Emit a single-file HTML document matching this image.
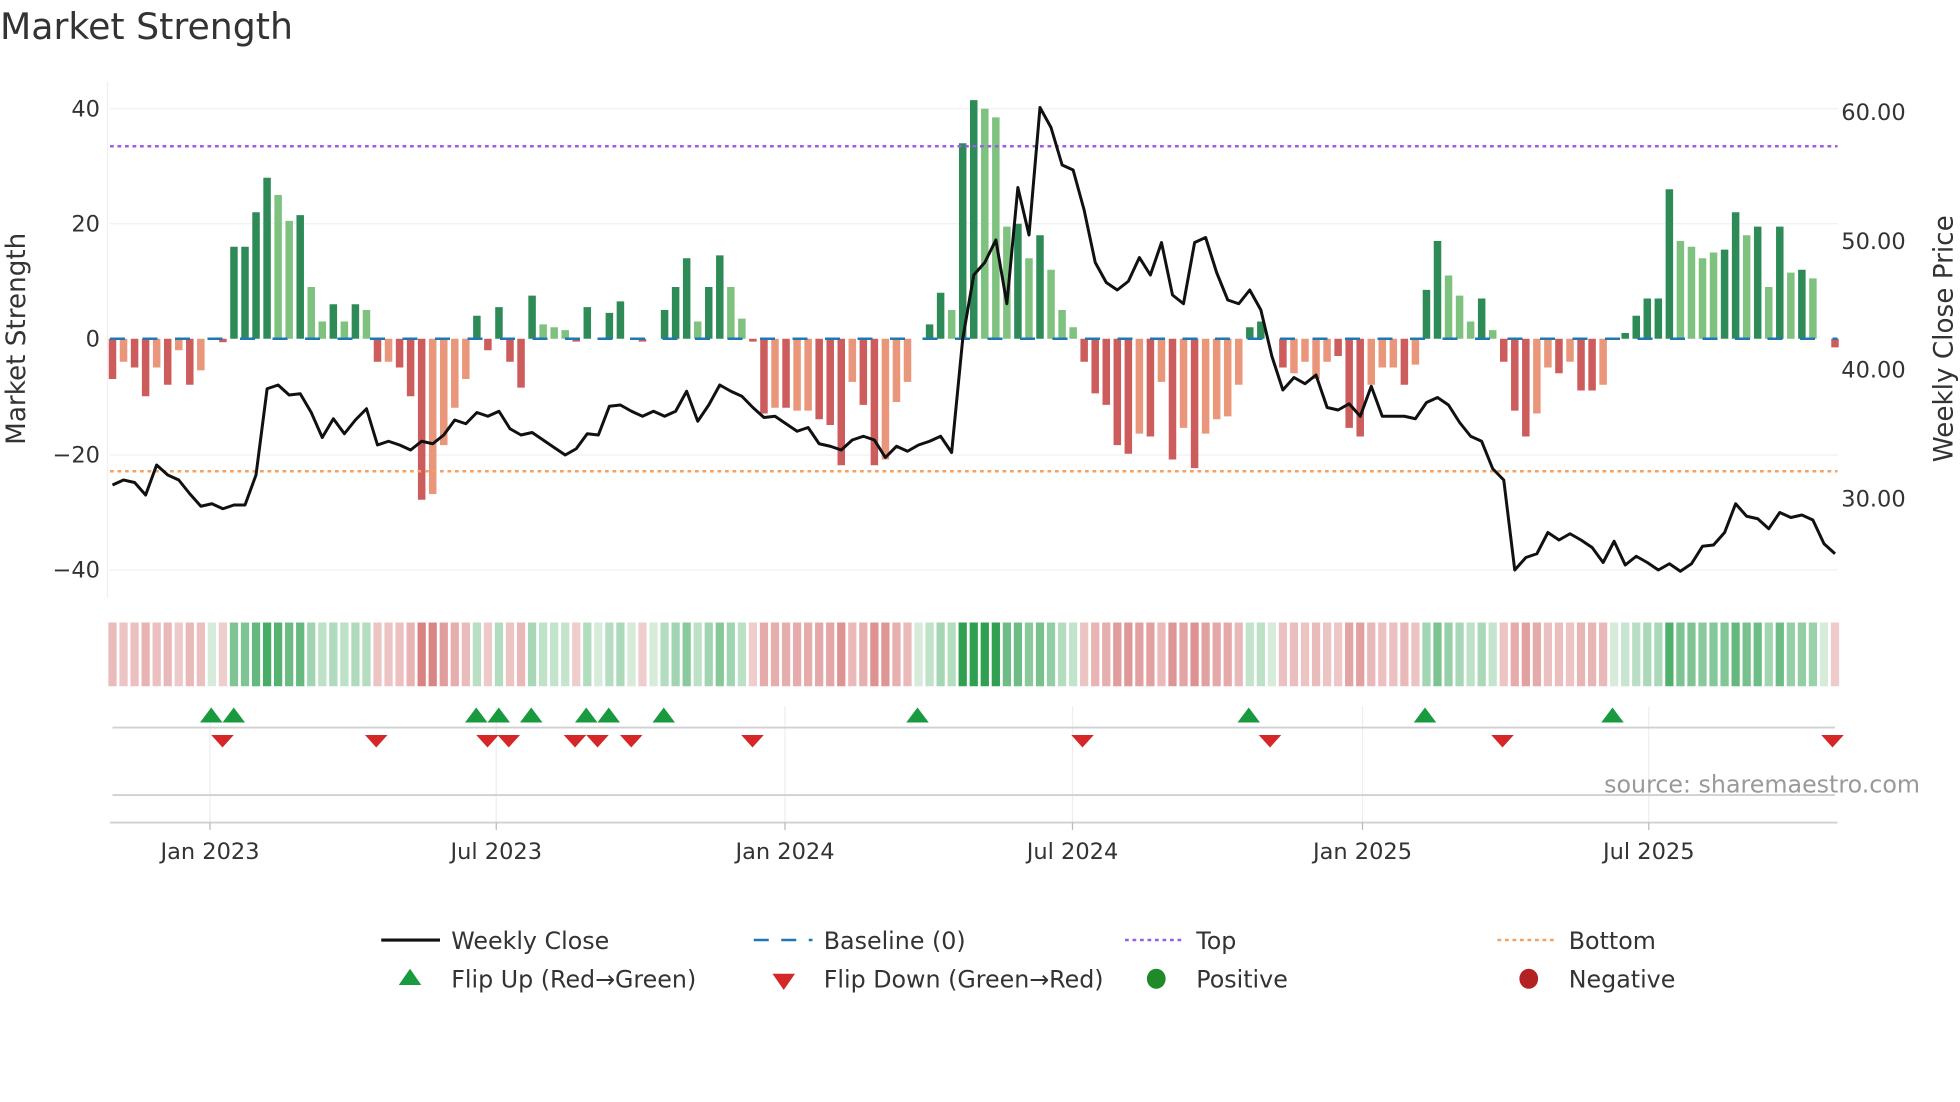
<!DOCTYPE html>
<html><head><meta charset="utf-8"><style>
html,body{margin:0;padding:0;background:#fff;width:1960px;height:1102px;overflow:hidden}
svg{display:block}
text{font-family:"DejaVu Sans","Liberation Sans",sans-serif;fill:#333}
</style></head><body>
<svg id="c" width="1960" height="1102" viewBox="0 0 1568 881.6" xmlns="http://www.w3.org/2000/svg">
<text x="0" y="31" font-size="29" fill="#333">Market Strength</text>
<g stroke="#eef0f4" stroke-width="1">
<line x1="88" x2="1470" y1="87" y2="87"/><line x1="88" x2="1470" y1="179" y2="179"/><line x1="88" x2="1470" y1="364" y2="364"/><line x1="88" x2="1470" y1="456" y2="456"/>
</g>
<line x1="86" x2="86" y1="65" y2="478" stroke="#eef0f4"/>
<g font-size="18" text-anchor="end">
<text x="80" y="93">40</text><text x="80" y="185">20</text><text x="80" y="277">0</text><text x="80" y="370">−20</text><text x="80" y="462">−40</text>
</g>
<g font-size="18">
<text x="1473" y="96">60.00</text><text x="1473" y="199">50.00</text><text x="1473" y="302">40.00</text><text x="1473" y="405">30.00</text>
</g>
<text transform="translate(20,271) rotate(-90)" font-size="21" text-anchor="middle">Market Strength</text>
<text transform="translate(1562,271) rotate(-90)" font-size="21" text-anchor="middle">Weekly Close Price</text>
<g id="bars"></g>
<line x1="88" x2="1470" y1="271" y2="271" stroke="#1f77b4" stroke-width="2" stroke-dasharray="12,14"/>
<line x1="88" x2="1470" y1="117" y2="117" stroke="#9b5de5" stroke-width="2" stroke-dasharray="3,3"/>
<line x1="88" x2="1470" y1="377" y2="377" stroke="#f4a261" stroke-width="2" stroke-dasharray="3,3"/>
<polyline id="price" fill="none" stroke="#111" stroke-width="2.4" stroke-linejoin="round"/>
<g id="heat"></g>
<g stroke="#eceef2" stroke-width="1">
<line x1="168" x2="168" y1="565" y2="658"/><line x1="397" x2="397" y1="565" y2="658"/><line x1="628" x2="628" y1="565" y2="658"/><line x1="858" x2="858" y1="565" y2="658"/><line x1="1090" x2="1090" y1="565" y2="658"/><line x1="1319" x2="1319" y1="565" y2="658"/>
</g>
<line x1="90" x2="1468" y1="582" y2="582" stroke="#d0d0d4" stroke-width="1.5"/>
<line x1="90" x2="1468" y1="636" y2="636" stroke="#d0d0d4" stroke-width="1.5"/>
<line x1="88" x2="1470" y1="658" y2="658" stroke="#d0d0d4" stroke-width="1.5"/>
<g stroke="#bbb"><line x1="168" x2="168" y1="658" y2="664"/><line x1="397" x2="397" y1="658" y2="664"/><line x1="628" x2="628" y1="658" y2="664"/><line x1="858" x2="858" y1="658" y2="664"/><line x1="1090" x2="1090" y1="658" y2="664"/><line x1="1319" x2="1319" y1="658" y2="664"/></g>
<g id="marks"></g>
<text x="1536" y="634" font-size="19" text-anchor="end" style="fill:#999">source: sharemaestro.com</text>
<g font-size="18" text-anchor="middle">
<text x="168" y="687">Jan 2023</text><text x="397" y="687">Jul 2023</text><text x="628" y="687">Jan 2024</text><text x="858" y="687">Jul 2024</text><text x="1090" y="687">Jan 2025</text><text x="1319" y="687">Jul 2025</text>
</g>
<g font-size="19">
<line x1="305" x2="352" y1="752" y2="752" stroke="#111" stroke-width="2.5"/><text x="361" y="759">Weekly Close</text>
<line x1="603" x2="650" y1="752" y2="752" stroke="#1f77b4" stroke-width="2" stroke-dasharray="12,10"/><text x="659" y="759">Baseline (0)</text>
<line x1="900" x2="947" y1="752" y2="752" stroke="#9b5de5" stroke-width="2" stroke-dasharray="3,3"/><text x="957" y="759">Top</text>
<line x1="1198" x2="1245" y1="752" y2="752" stroke="#f4a261" stroke-width="2" stroke-dasharray="3,3"/><text x="1255" y="759">Bottom</text>
<polygon points="319,788 337,788 328,775" fill="#1a9a3e"/><text x="361" y="790">Flip Up (Red→Green)</text>
<polygon points="618,779 636,779 627,792" fill="#d62728"/><text x="659" y="790">Flip Down (Green→Red)</text>
<ellipse cx="925" cy="783" rx="7.5" ry="8" fill="#1f8a2a"/><text x="957" y="790">Positive</text>
<ellipse cx="1223" cy="783" rx="7.5" ry="8" fill="#b22222"/><text x="1255" y="790">Negative</text>
</g>
</svg>
<script>
var B=[[-7,'d'],[-4,'l'],[-5,'d'],[-10,'d'],[-5,'l'],[-8,'d'],[-2,'l'],[-8,'d'],[-5.5,'l'],[0,'d'],[-0.6,'d'],[16,'d'],[16,'d'],[22,'d'],[28,'d'],[25,'l'],[20.5,'l'],[21.5,'d'],[9,'l'],[3,'l'],[6,'d'],[3,'l'],[6,'d'],[5,'l'],[-4,'d'],[-4,'l'],[-5,'d'],[-10,'d'],[-28,'d'],[-27,'l'],[-18.5,'l'],[-12,'l'],[-7,'l'],[4,'d'],[-2,'d'],[5.5,'d'],[-4,'d'],[-8.5,'d'],[7.5,'d'],[2.5,'l'],[2,'l'],[1.5,'l'],[-0.5,'d'],[5.5,'d'],[0,'d'],[4.5,'d'],[6.5,'d'],[0,'d'],[-0.5,'d'],[0,'d'],[5,'d'],[9,'d'],[14,'d'],[3,'l'],[9,'d'],[14.5,'d'],[9,'l'],[3.5,'l'],[-0.5,'d'],[-13,'d'],[-12,'l'],[-12,'d'],[-12.5,'l'],[-12.5,'l'],[-14,'d'],[-15,'d'],[-22,'d'],[-7.5,'l'],[-11.5,'d'],[-22,'d'],[-21,'l'],[-11,'l'],[-7.5,'l'],[0,'d'],[2.5,'d'],[8,'d'],[5,'l'],[34,'d'],[41.5,'d'],[40,'l'],[38.5,'l'],[19.5,'l'],[20,'d'],[14,'l'],[18,'d'],[12,'l'],[5,'l'],[2,'l'],[-4,'d'],[-9.5,'d'],[-11.5,'d'],[-18.5,'d'],[-20,'d'],[-16.5,'l'],[-17,'d'],[-7.5,'l'],[-21,'d'],[-15.5,'l'],[-22.5,'d'],[-16.5,'l'],[-14,'l'],[-13.5,'l'],[-8,'l'],[2,'d'],[3,'d'],[0,'d'],[-5,'d'],[-6,'l'],[-4,'l'],[-7,'l'],[-4,'l'],[-3,'d'],[-15.5,'d'],[-17,'d'],[-8,'l'],[-5,'l'],[-5,'l'],[-8,'d'],[-4.5,'l'],[8.5,'d'],[17,'d'],[11,'l'],[7.5,'l'],[3,'l'],[7,'d'],[1.5,'l'],[-4,'d'],[-12.5,'d'],[-17,'d'],[-13,'l'],[-5,'l'],[-6,'d'],[-4,'l'],[-9,'d'],[-9,'d'],[-8,'l'],[0,'d'],[1,'d'],[4,'d'],[7,'d'],[7,'d'],[26,'d'],[17,'l'],[16,'l'],[14,'l'],[15,'l'],[15.5,'d'],[22,'d'],[18,'l'],[19.5,'d'],[9,'l'],[19.5,'d'],[11.5,'l'],[12,'d'],[10.5,'l'],[0,'d'],[-1.5,'d']];
var P=[388,384,386,396,372,380,384,395,405,403,407,404,404,380,311,308,316,315,330,350,335,347,336,327,356,353,356,360,353,355,348,336,339,330,333,329,343,348,346,352,358,364,359,347,348,325,324,329,333,329,333,329,313,337,324,308,313,317,326,334,333,339,345,342,355,357,360,352,349,352,366,357,361,356,353,349,362,271,220,210,192,243,150,188,86,102,132,136,168,210,226,232,225,206,220,194,236,243,194,190,218,240,243,232,248,285,312,302,307,300,326,328,323,333,309,333,333,333,335,322,318,324,338,349,353,375,384,456,446,443,426,432,427,432,438,450,433,452,445,450,456,451,457,451,437,436,426,403,413,415,423,410,414,412,416,435,443];
var n=B.length,step=(1468-90)/(n-1),ns="http://www.w3.org/2000/svg";
function el(t,a,p){var e=document.createElementNS(ns,t);for(var k in a)e.setAttribute(k,a[k]);p.appendChild(e);return e;}
var gb=document.getElementById('bars'),gh=document.getElementById('heat'),gm=document.getElementById('marks');
var pts=[];
for(var i=0;i<n;i++){var x=90+i*step,v=B[i][0],s=B[i][1];
 var col=v>=0?(s=='d'?'#2e8b57':'#7fc27f'):(s=='d'?'#cd5c5c':'#e9967a');
 var h=Math.abs(v)*4.6;
 if(h>0.5) el('rect',{x:x-3,y:v>=0?271-h:271,width:6,height:h,fill:col},gb);
 var a=Math.min(1,0.25+Math.abs(v)/40*0.9);
 var hc=v>0?'rgba(46,160,80,'+a+')':'rgba(205,92,92,'+(0.3+Math.abs(v)/30*0.5)+')';
 if(v==0) hc='rgba(120,190,130,0.3)';
 el('rect',{x:x-3.3,y:498,width:6.6,height:51,fill:hc},gh);
 pts.push(x.toFixed(1)+','+P[i]);}
document.getElementById('price').setAttribute('points',pts.join(' '));
[169,187,381,399,425,469,487,531,734,999,1140,1290].forEach(function(x){el('polygon',{points:(x-9)+',578 '+(x+9)+',578 '+x+',566',fill:'#1a9a3e'},gm);});
[178,301,390,407,460,478,505,602,866,1016,1202,1466].forEach(function(x){el('polygon',{points:(x-9)+',588 '+(x+9)+',588 '+x+',598',fill:'#d62728'},gm);});
</script>
</body></html>
